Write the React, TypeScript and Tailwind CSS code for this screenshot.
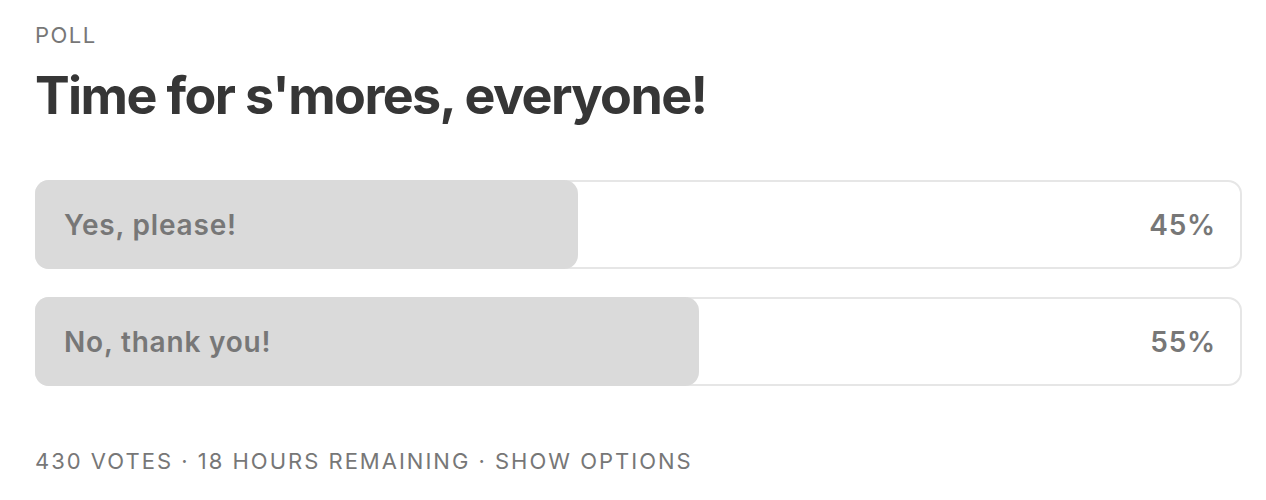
const options = [
  { label: "Yes, please!", pct: 45 },
  { label: "No, thank you!", pct: 55 },
];

export default function App() {
  return (
    <div className="w-[1266px] h-[500px] bg-white px-[35px] pt-[24px] font-['Inter',sans-serif]">
      <div className="text-[22px] leading-[22px] tracking-[1.5px] text-[#777777]">POLL</div>

      <h1 className="mt-[24px] text-[52px] leading-[52px] font-bold tracking-[-1.6px] text-[#363636]">
        Time for s'mores, everyone!
      </h1>

      <div className="mt-[58px] flex flex-col gap-[28px]">
        {options.map((o) => (
          <div key={o.label} className="relative h-[89px] w-[1207px]">
            <div className="absolute inset-0 rounded-[14px] border-2 border-[#e6e6e6]"></div>
            <div
              className="absolute left-0 top-0 bottom-0 rounded-[14px] bg-[#dadada]"
              style={{ width: `${o.pct}%` }}
            ></div>
            <div className="relative flex h-full items-center justify-between pl-[29px] pr-[26px] text-[28px] font-semibold tracking-[0.8px] text-[#777777]">
              <span>{o.label}</span>
              <span>{o.pct}%</span>
            </div>
          </div>
        ))}
      </div>

      <div className="mt-[65px] text-[22px] leading-[21px] tracking-[2px] text-[#777777]">
        430 VOTES · 18 HOURS REMAINING · SHOW OPTIONS
      </div>
    </div>
  );
}
